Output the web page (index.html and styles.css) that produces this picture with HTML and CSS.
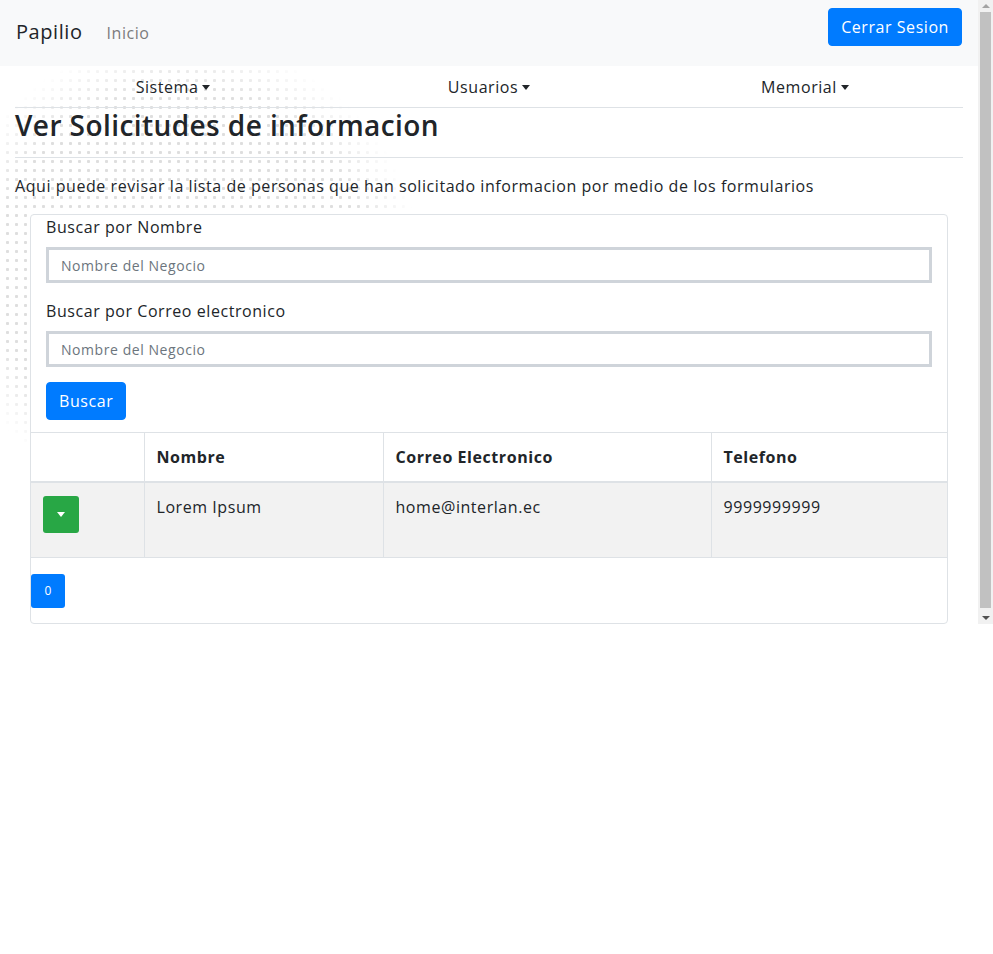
FILE: index.html
```html
<!DOCTYPE html>
<html lang="es">
<head>
<meta charset="utf-8">
<title>Papilio</title>
<link rel="stylesheet" href="styles.css">
</head>
<body>
<div class="page">
  <div class="viewport">
    <div class="dots"></div>
    <nav class="topbar">
      <div class="brand-group">
        <span class="brand">Papilio</span>
        <span class="nav-link">Inicio</span>
      </div>
      <button class="btn btn-primary btn-logout">Cerrar Sesion</button>
    </nav>
    <div class="container">
      <div class="menu">
        <span class="menu-item">Sistema<span class="caret"></span></span>
        <span class="menu-item">Usuarios<span class="caret"></span></span>
        <span class="menu-item">Memorial<span class="caret"></span></span>
      </div>
      <h3 class="title">Ver Solicitudes de informacion</h3>
      <hr class="rule">
      <p class="lead">Aqui puede revisar la lista de personas que han solicitado informacion por medio de los formularios</p>
      <div class="card">
        <div class="card-body">
          <label class="label">Buscar por Nombre</label>
          <input class="input" type="text" placeholder="Nombre del Negocio">
          <label class="label">Buscar por Correo electronico</label>
          <input class="input" type="text" placeholder="Nombre del Negocio">
          <button class="btn btn-primary btn-search">Buscar</button>
        </div>
        <table class="table">
          <thead>
            <tr>
              <th class="col-a"></th>
              <th class="col-b">Nombre</th>
              <th class="col-c">Correo Electronico</th>
              <th class="col-d">Telefono</th>
            </tr>
          </thead>
          <tbody>
            <tr>
              <td><button class="btn-toggle"><span class="caret caret-white"></span></button></td>
              <td>Lorem Ipsum</td>
              <td>home@interlan.ec</td>
              <td>9999999999</td>
            </tr>
          </tbody>
        </table>
        <div class="pager">
          <button class="page-btn">0</button>
        </div>
      </div>
    </div>
  </div>
  <div class="scrollbar">
    <span class="arrow arrow-up"></span>
    <span class="thumb"></span>
    <span class="arrow arrow-down"></span>
  </div>
</div>
</body>
</html>
```
FILE: styles.css
```css
* { box-sizing: border-box; }
html, body { margin: 0; padding: 0; background: #fff; }
body {
  font-family: "Open Sans", "Noto Sans", sans-serif;
  color: #212529;
  font-size: 16px;
  line-height: 1.5;
  letter-spacing: 0.035em;
}
.page {
  display: flex;
  align-items: flex-start;
}
.viewport {
  position: relative;
  width: 978px;
  height: 625px;
  overflow: hidden;
  flex: none;
}
.scrollbar {
  width: 15px;
  height: 624px;
  background: #f1f1f1;
  display: flex;
  flex-direction: column;
  align-items: center;
  padding: 4px 0 4px;
}
.arrow {
  width: 0; height: 0;
  border-left: 4px solid transparent;
  border-right: 4px solid transparent;
}
.arrow-up { border-bottom: 4px solid #a3a3a3; margin-bottom: 4px; }
.arrow-down { border-top: 4px solid #505050; margin-top: 4px; }
.thumb {
  flex: 1;
  width: 11px;
  background: #c1c1c1;
  margin: 0 0 4px;
}
.dots {
  position: absolute;
  left: -60px;
  top: 40px;
  width: 480px;
  height: 460px;
  background-image: radial-gradient(circle, #dedede 1.3px, transparent 1.9px);
  background-size: 9px 9px;
  -webkit-mask-image: radial-gradient(ellipse at 50% 50%, #000 55%, transparent 71%);
  mask-image: radial-gradient(ellipse at 50% 50%, #000 55%, transparent 71%);
  pointer-events: none;
}
.topbar {
  position: relative;
  background: #f8f9fa;
  height: 66px;
  display: flex;
  justify-content: space-between;
  align-items: flex-start;
  padding: 8px 16px;
}
.brand-group {
  display: flex;
  align-items: baseline;
  padding-top: 9px;
}
.brand {
  font-size: 20px;
  line-height: 30px;
  margin-right: 24px;
}
.nav-link {
  color: #7b7c7d;
  font-size: 16px;
}
.btn {
  font-family: inherit;
  letter-spacing: inherit;
  border: 1px solid transparent;
  border-radius: 4px;
  font-size: 16px;
  line-height: 24px;
  padding: 6px 12px;
  cursor: pointer;
}
.btn-primary {
  background: #007bff;
  border-color: #007bff;
  color: #fff;
}
.btn-logout { height: 38px; }
.container {
  position: relative;
  padding: 0 15px;
}
.menu {
  display: grid;
  grid-template-columns: 1fr 1fr 1fr;
  border-bottom: 1px solid #dee2e6;
  height: 42px;
  align-items: center;
}
.menu-item {
  text-align: center;
  font-size: 16px;
}
.caret {
  display: inline-block;
  width: 0; height: 0;
  margin-left: 4px;
  vertical-align: 3px;
  border-top: 5px solid #212529;
  border-left: 4.5px solid transparent;
  border-right: 4.5px solid transparent;
}
.caret-white { border-top-color: #fff; margin-left: 0; vertical-align: 2px; }
.title {
  font-size: 28px;
  font-weight: 600;
  line-height: 34px;
  margin: 0;
  letter-spacing: 0.015em;
}
.rule {
  border: 0;
  border-top: 1px solid #dee2e6;
  margin: 15px 0 16px;
}
.lead {
  margin: 0 0 16px;
}
.card {
  margin: 0 15px;
  border: 1px solid #dee2e6;
  border-radius: 4px;
  background: #fff;
}
.card-body {
  padding: 0 15px 12px;
  display: flex;
  flex-direction: column;
  align-items: flex-start;
}
.label {
  line-height: 24px;
  margin-bottom: 8px;
}
.input {
  width: 100%;
  height: 36px;
  border: 3px solid #cfd4da;
  padding: 0 12px;
  font-family: inherit;
  letter-spacing: inherit;
  font-size: 14px;
  color: #495057;
  margin-bottom: 16px;
  background: #fff;
}
.input::placeholder { color: #6c757d; }
.btn-search { height: 38px; margin-top: -1px; }
.table {
  width: 100%;
  border-collapse: collapse;
}
.table th, .table td {
  border: 1px solid #dee2e6;
  padding: 12px;
  text-align: left;
  vertical-align: top;
}
.table tr > :first-child { border-left: 0; }
.table tr > :last-child { border-right: 0; }
.table th { font-weight: 700; border-bottom-width: 2px; height: 49px; }
.table tbody td { background: #f2f2f2; height: 75px; }
.col-a { width: 113px; }
.col-b { width: 239px; }
.col-c { width: 328px; }
.btn-toggle {
  width: 36px;
  height: 37px;
  margin-top: 1px;
  background: #28a745;
  border: 0;
  border-radius: 3px;
  display: flex;
  align-items: center;
  justify-content: center;
  padding: 0;
}
.pager { padding: 16px 0 15px; }
.page-btn {
  display: block;
  width: 34px;
  height: 34px;
  background: #007bff;
  color: #fff;
  border: 0;
  border-radius: 3px;
  font-family: inherit;
  font-size: 12px;
  padding: 0;
}
```
